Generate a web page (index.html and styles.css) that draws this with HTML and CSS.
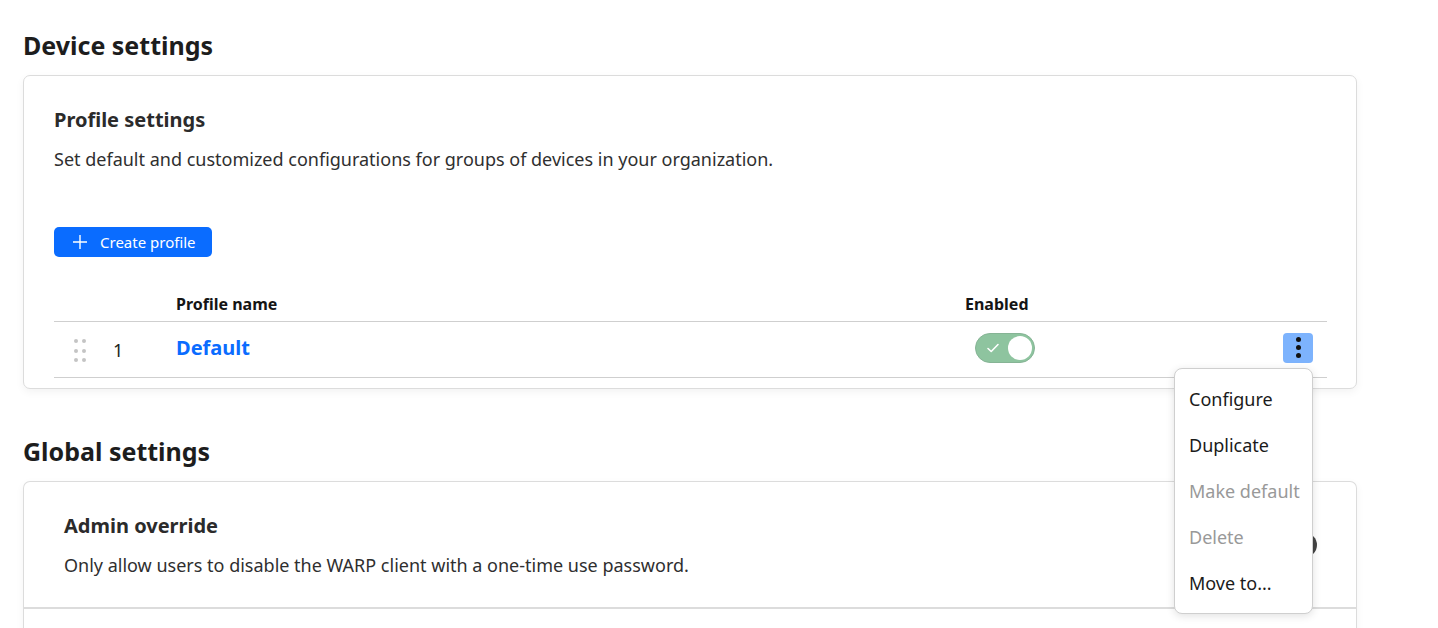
FILE: index.html
```html
<!DOCTYPE html>
<html lang="en">
<head>
<meta charset="utf-8">
<title>Device settings</title>
<link rel="stylesheet" href="styles.css">
</head>
<body>
<main class="page">
  <h1 class="section-title">Device settings</h1>
  <section class="card card-profiles">
    <h2 class="card-title">Profile settings</h2>
    <p class="card-desc">Set default and customized configurations for groups of devices in your organization.</p>
    <button class="btn-primary" type="button">
      <svg class="btn-icon" viewBox="0 0 16 16" width="16" height="16" aria-hidden="true"><path d="M8 1v14M1 8h14" stroke="currentColor" stroke-width="1.4" fill="none"/></svg>
      <span>Create profile</span>
    </button>
    <div class="table">
      <div class="thead">
        <div class="cell"></div>
        <div class="cell"></div>
        <div class="cell th">Profile name</div>
        <div class="cell th">Enabled</div>
        <div class="cell"></div>
      </div>
      <div class="trow">
        <div class="cell handle-cell">
          <span class="handle"><i></i><i></i><i></i><i></i><i></i><i></i></span>
        </div>
        <div class="cell num">1</div>
        <div class="cell"><a class="profile-link" href="#">Default</a></div>
        <div class="cell toggle-cell">
          <span class="toggle on">
            <svg class="toggle-check" viewBox="0 0 14 14" width="14" height="14" aria-hidden="true"><path d="M2 7.5l3.2 3L12 3.5" stroke="#fff" stroke-width="1.6" fill="none" stroke-linecap="round" stroke-linejoin="round"/></svg>
            <span class="knob"></span>
          </span>
        </div>
        <div class="cell actions">
          <div class="menu-wrap">
            <button class="kebab" type="button" aria-label="More actions"><i></i><i></i><i></i></button>
            <ul class="menu">
              <li class="menu-item">Configure</li>
              <li class="menu-item">Duplicate</li>
              <li class="menu-item disabled">Make default</li>
              <li class="menu-item disabled">Delete</li>
              <li class="menu-item">Move to...</li>
            </ul>
          </div>
        </div>
      </div>
    </div>
  </section>

  <h1 class="section-title">Global settings</h1>
  <section class="card card-global">
    <div class="setting">
      <div class="setting-text">
        <h2 class="card-title">Admin override</h2>
        <p class="card-desc">Only allow users to disable the WARP client with a one-time use password.</p>
      </div>
      <span class="toggle off"><span class="knob"></span></span>
    </div>
    <div class="setting setting-next"></div>
  </section>
</main>
</body>
</html>
```
FILE: styles.css
```css
* { box-sizing: border-box; }
html, body { margin: 0; padding: 0; background: #fff; }
body {
  font-family: "Noto Sans", "Open Sans", "Liberation Sans", sans-serif;
  color: #222;
  overflow: hidden;
  height: 628px;
}
.page {
  width: 1334px;
  margin-left: 23px;
  padding-top: 29px;
}
.section-title {
  margin: 0 0 14px;
  font-size: 25px;
  line-height: 32px;
  font-weight: 700;
  color: #1d1d1d;
}
.card {
  border: 1px solid #dcdcdc;
  border-radius: 7px;
  background: #fff;
  box-shadow: 0 3px 8px rgba(0,0,0,0.05);
}
.card-profiles {
  padding: 30px 29px 10px 30px;
  margin-bottom: 46px;
}
.card-title {
  margin: 0;
  font-size: 20px;
  line-height: 28px;
  font-weight: 700;
  color: #2b2b2b;
}
.card-desc {
  margin: 13px 0 0;
  font-size: 18px;
  line-height: 24px;
  color: #2f2f2f;
}
.btn-primary {
  margin-top: 56px;
  display: inline-flex;
  align-items: center;
  gap: 12px;
  height: 30px;
  padding: 0 16px 0 18px;
  border: 0;
  border-radius: 5px;
  background: #0a6cff;
  color: #fff;
  font-family: inherit;
  font-size: 15px;
}
.btn-icon { display: block; }
.table { margin-top: 25px; }
.thead, .trow {
  display: grid;
  grid-template-columns: 46px 76px 789px 1fr 44px;
}
.thead {
  height: 40px;
  align-items: end;
  border-bottom: 1px solid #cfcfcf;
}
.th {
  font-size: 16px;
  font-weight: 700;
  line-height: 20px;
  padding-bottom: 7px;
  color: #151515;
}
.trow {
  height: 56px;
  align-items: center;
  border-bottom: 1px solid #cfcfcf;
}
.cell { min-width: 0; }
.handle-cell { padding-left: 20px; padding-top: 2px; }
.handle {
  display: grid;
  grid-template-columns: 4px 4px;
  column-gap: 4px;
  row-gap: 5.5px;
  width: 12px;
}
.handle i {
  display: block;
  width: 4px;
  height: 4px;
  border-radius: 50%;
  background: #c4c4c4;
}
.num {
  padding-left: 13px;
  font-size: 18px;
  color: #222;
  padding-top: 0;
}
.profile-link {
  font-size: 20px;
  font-weight: 700;
  color: #0a6cff;
  text-decoration: none;
  position: relative;
  top: -2px;
}
.toggle-cell { padding-left: 10px; padding-top: 2px; }
.toggle {
  position: relative;
  display: inline-flex;
  align-items: center;
  width: 60px;
  height: 30px;
  border-radius: 15px;
}
.toggle.on {
  background: #8ec49f;
  border: 1px solid #86b495;
}
.toggle-check {
  position: absolute;
  left: 10px;
  top: 7px;
}
.toggle.on .knob {
  position: absolute;
  right: 2px;
  top: 2px;
  width: 24px;
  height: 24px;
  border-radius: 50%;
  background: #fff;
}
.actions { display: flex; justify-content: flex-start; padding-bottom: 4px; }
.menu-wrap { position: relative; }
.kebab {
  display: flex;
  flex-direction: column;
  align-items: center;
  justify-content: center;
  gap: 3px;
  width: 30px;
  height: 30px;
  padding: 0;
  border: 0;
  border-radius: 4px;
  background: #7db3fd;
}
.kebab i {
  display: block;
  width: 5px;
  height: 5px;
  border-radius: 50%;
  background: #111;
}
.menu {
  position: absolute;
  top: 35px;
  right: 0;
  z-index: 10;
  width: 139px;
  margin: 0;
  padding: 7px 0;
  list-style: none;
  background: #fff;
  border: 1px solid #cfcfcf;
  border-radius: 8px;
  box-shadow: 0 2px 8px rgba(0,0,0,0.12);
}
.menu-item {
  height: 46px;
  line-height: 46px;
  padding-left: 14px;
  font-size: 18px;
  color: #1b1b1b;
  white-space: nowrap;
}
.menu-item.disabled { color: #999; }
.card-global { overflow: hidden; height: 200px; border-bottom: 0; border-radius: 7px 7px 0 0; }
.setting {
  display: flex;
  align-items: center;
  justify-content: space-between;
  padding: 30px 39px 30px 40px;
  border-bottom: 2px solid #dcdcdc;
}
.setting-next { border-bottom: 0; }
.toggle.off { width: 60px; }
.toggle.off .knob {
  position: absolute;
  right: 0;
  top: 3px;
  width: 24px;
  height: 24px;
  border-radius: 50%;
  background: #444;
}
```
